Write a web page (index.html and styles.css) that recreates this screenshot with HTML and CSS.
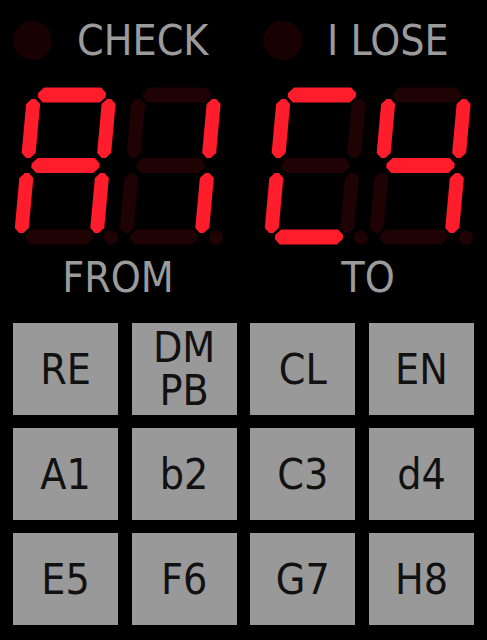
FILE: index.html
```html
<!DOCTYPE html>
<html lang="en">
<head>
  <meta charset="UTF-8" />
  <meta name="viewport" content="width=device-width, initial-scale=1.0"/>
  <title>Chess Clock Entry</title>
  <link rel="stylesheet" href="styles.css">
</head>
<body>
  <div class="row status">
    <div class="lamp-group"><span class="lamp"></span><span class="lamp-text">CHECK</span></div>
    <div class="lamp-group"><span class="lamp"></span><span class="lamp-text">I LOSE</span></div>
  </div>

  <div class="row displays">
    <div class="display">
      <svg class="digit" data-char="A" width="105" height="162"></svg>
      <svg class="digit" data-char="1" width="105" height="162"></svg>
    </div>
    <div class="display">
      <svg class="digit" data-char="C" width="105" height="162"></svg>
      <svg class="digit" data-char="4" width="105" height="162"></svg>
    </div>
  </div>

  <div class="row labels">
    <div class="label">FROM</div>
    <div class="label">TO</div>
  </div>

  <div class="keypad">
    <button class="key">RE</button>
    <button class="key">DM<br>PB</button>
    <button class="key">CL</button>
    <button class="key">EN</button>
    <button class="key">A1</button>
    <button class="key">b2</button>
    <button class="key">C3</button>
    <button class="key">d4</button>
    <button class="key">E5</button>
    <button class="key">F6</button>
    <button class="key">G7</button>
    <button class="key">H8</button>
  </div>

  <script>
    // which segments light up for each character
    const font = {
      "A": "abcefg",
      "1": "bc",
      "C": "adef",
      "4": "bcfg"
    };

    function horiz(yc) {
      const x0 = 18.5, x1 = 86.5;
      return [[x0, yc - 2], [x0 + 5.5, yc - 7.5], [x1 - 5.5, yc - 7.5], [x1, yc - 2],
              [x1, yc + 2], [x1 - 5.5, yc + 7.5], [x0 + 5.5, yc + 7.5], [x0, yc + 2]];
    }

    function vert(xc, y0, y1) {
      return [[xc - 2, y0], [xc + 2, y0], [xc + 7, y0 + 5], [xc + 7, y1 - 5],
              [xc + 2, y1], [xc - 2, y1], [xc - 7, y1 - 5], [xc - 7, y0 + 5]];
    }

    const segments = {
      a: horiz(9),
      g: horiz(79.5),
      d: horiz(151),
      f: vert(14.5, 13, 72),
      b: vert(90, 13, 72),
      e: vert(14.5, 87, 147),
      c: vert(90, 87, 147)
    };

    document.querySelectorAll(".digit").forEach(svg => {
      const lit = font[svg.dataset.char] || "";
      let html = '<g transform="translate(0 79.5) skewX(-5.23) translate(0 -79.5)">';
      for (const name in segments) {
        const pts = segments[name].map(p => p.join(",")).join(" ");
        html += '<polygon class="seg ' + (lit.includes(name) ? "on" : "off") + '" points="' + pts + '"/>';
      }
      html += '</g><circle class="seg off" cx="98" cy="151.5" r="7"/>';
      svg.innerHTML = html;
    });
  </script>
</body>
</html>
```

FILE: styles.css
```css
body {
  margin: 0;
  background-color: #000;
  font-family: "DejaVu Sans Condensed", "DejaVu Sans", sans-serif;
  font-stretch: condensed;
  font-size: 42.5px;
  color: #9b9b9b;
}
.row {
  display: grid;
  grid-template-columns: 236px 236px;
  column-gap: 14px;
}
.status {
  padding-top: 21px;
}
.lamp-group {
  display: flex;
  align-items: center;
  height: 39px;
  padding-left: 13px;
}
.lamp {
  width: 39px;
  height: 39px;
  border-radius: 50%;
  background-color: #170101;
}
.lamp-text {
  margin-left: 25px;
  white-space: nowrap;
}
.displays {
  margin-top: 26px;
}
.display {
  display: flex;
  padding-left: 13px;
}
.digit {
  display: block;
  overflow: visible;
}
.seg.on  { fill: #ff1c2b; }
.seg.off { fill: #1e0204; }
.labels {
  margin-top: 5px;
}
.label {
  text-align: center;
}
.keypad {
  display: grid;
  grid-template-columns: repeat(4, 105px);
  grid-auto-rows: 92px;
  justify-content: space-between;
  row-gap: 13px;
  padding: 0 13px;
  margin-top: 21px;
}
.key {
  border: none;
  padding: 0;
  background-color: #999;
  color: #111;
  font-family: inherit;
  font-stretch: inherit;
  font-size: 42.5px;
  line-height: 43px;
}
```
